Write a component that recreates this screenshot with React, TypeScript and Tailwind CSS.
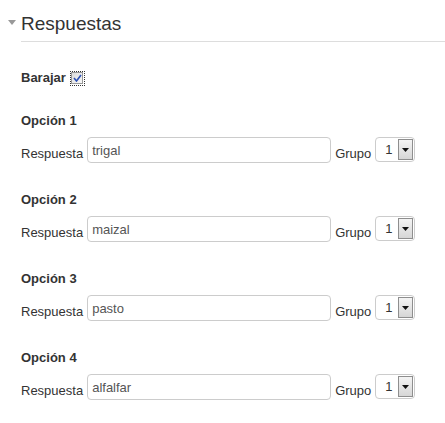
const opciones = [
  { n: 1, respuesta: "trigal" },
  { n: 2, respuesta: "maizal" },
  { n: 3, respuesta: "pasto" },
  { n: 4, respuesta: "alfalfar" },
];

function GrupoSelect() {
  return (
    <div className="flex h-[25px] w-[40px] items-stretch rounded-[4px] border border-[#ccc] bg-white">
      <span className="flex-1 pl-[9px] pt-[4px] text-[13px] leading-[16px] text-[#333]">1</span>
      <span className="my-[1px] mr-[1px] flex w-[15px] items-center justify-center border border-[#8e8e8e] bg-gradient-to-b from-[#f4f4f4] to-[#d6d6d6]">
        <svg width="7" height="4" viewBox="0 0 7 4">
          <path d="M0 0h7L3.5 4z" fill="#111" />
        </svg>
      </span>
    </div>
  );
}

function Opcion({ n, respuesta }: { n: number; respuesta: string }) {
  return (
    <div>
      <div className="text-[13px] font-bold leading-[16px] text-[#333]">Opción {n}</div>
      <div className="mt-[8px] flex items-start">
        <label className="pt-[9px] text-[13px] leading-[16px] text-[#333]">Respuesta</label>
        <input
          readOnly
          value={respuesta}
          className="ml-[4px] h-[26px] w-[244px] rounded-[4px] border border-[#ccc] bg-white px-[4px] text-[13px] text-[#555] outline-none"
        />
        <span className="ml-[4px] pt-[9px] text-[13px] leading-[16px] text-[#333]">Grupo</span>
        <div className="ml-[4px]">
          <GrupoSelect />
        </div>
      </div>
    </div>
  );
}

export default function App() {
  return (
    <div className="h-[423px] w-[445px] bg-white font-['Liberation_Sans',Arial,sans-serif]">
      <div className="flex items-start">
        <svg className="ml-[8px] mt-[20px]" width="8" height="5" viewBox="0 0 8 5">
          <path d="M0 0h8L4 5z" fill="#999" />
        </svg>
        <h2 className="ml-[5px] flex-1 border-b border-[#ddd] pb-[6px] pt-[13px] text-[19px] font-normal leading-[22px] text-[#333]">
          Respuestas
        </h2>
      </div>

      <div className="pl-[21px]">
        <div className="mt-[28px] flex items-center">
          <span className="text-[13px] font-bold leading-[16px] text-[#333]">Barajar</span>
          <span className="ml-[5px] flex h-[13px] w-[13px] items-center justify-center outline-1 outline-dotted outline-[#333]">
            <span className="flex h-[12px] w-[12px] items-center justify-center border border-[#999] bg-gradient-to-br from-[#dcdcdc] to-[#f8f8f8]">
              <svg width="9" height="8" viewBox="0 0 9 8">
                <path d="M1 4l2.5 3L8 1" fill="none" stroke="#2b4fb5" strokeWidth="1.6" />
              </svg>
            </span>
          </span>
        </div>

        <div className="mt-[27px] flex flex-col gap-[29px]">
          {opciones.map((o) => (
            <Opcion key={o.n} n={o.n} respuesta={o.respuesta} />
          ))}
        </div>
      </div>
    </div>
  );
}
